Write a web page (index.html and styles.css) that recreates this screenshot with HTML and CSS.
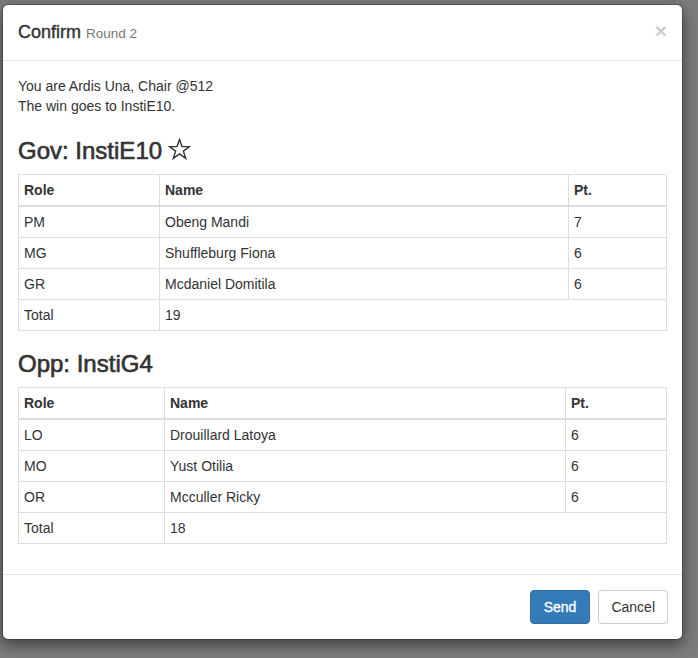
FILE: index.html
```html
<!DOCTYPE html>
<html>
<head>
<meta charset="utf-8">
<link rel="stylesheet" href="styles.css">
</head>
<body>
<div class="modal">
  <div class="modal-header">
    <h4 class="modal-title">Confirm <small>Round 2</small></h4>
    <span class="close">×</span>
  </div>
  <div class="modal-body">
    <div class="intro">You are Ardis Una, Chair @512<br>The win goes to InstiE10.</div>
    <h3 class="team-title first">Gov: InstiE10 <svg class="star" width="23" height="22" viewBox="0 0 23 22"><path d="M11.5 1.5 L14 8.6 L21.5 8.6 L15.4 13.1 L17.7 20.4 L11.5 15.9 L5.3 20.4 L7.6 13.1 L1.5 8.6 L9 8.6 Z" fill="none" stroke="#333" stroke-width="1.4" stroke-linejoin="miter"/></svg></h3>
    <table class="tbl">
      <colgroup><col class="c-role1"><col class="c-name1"><col></colgroup>
      <thead><tr><th>Role</th><th>Name</th><th>Pt.</th></tr></thead>
      <tbody>
        <tr><td>PM</td><td>Obeng Mandi</td><td>7</td></tr>
        <tr><td>MG</td><td>Shuffleburg Fiona</td><td>6</td></tr>
        <tr><td>GR</td><td>Mcdaniel Domitila</td><td>6</td></tr>
        <tr><td>Total</td><td colspan="2">19</td></tr>
      </tbody>
    </table>
    <h3 class="team-title">Opp: InstiG4</h3>
    <table class="tbl last">
      <colgroup><col class="c-role2"><col class="c-name2"><col></colgroup>
      <thead><tr><th>Role</th><th>Name</th><th>Pt.</th></tr></thead>
      <tbody>
        <tr><td>LO</td><td>Drouillard Latoya</td><td>6</td></tr>
        <tr><td>MO</td><td>Yust Otilia</td><td>6</td></tr>
        <tr><td>OR</td><td>Mcculler Ricky</td><td>6</td></tr>
        <tr><td>Total</td><td colspan="2">18</td></tr>
      </tbody>
    </table>
  </div>
  <div class="modal-footer">
    <button class="btn btn-primary">Send</button>
    <button class="btn btn-default">Cancel</button>
  </div>
</div>
</body>
</html>
```
FILE: styles.css
```css
html, body {
  margin: 0;
  padding: 0;
}
body {
  background: #7d7d7d;
  font-family: "Liberation Sans", Arial, sans-serif;
  font-size: 14px;
  line-height: 20px;
  color: #333;
  padding: 4px 0 0 2px;
  height: 658px;
  box-sizing: border-box;
  overflow: hidden;
}
.modal {
  width: 681px;
  box-sizing: border-box;
  background: #fff;
  border: 1px solid rgba(0,0,0,.2);
  border-radius: 6px;
  box-shadow: 0 5px 15px rgba(0,0,0,.5);
  background-clip: padding-box;
}
.modal-header {
  position: relative;
  padding: 14px 15px 13px;
  border-bottom: 1px solid #e5e5e5;
}
.modal-title {
  margin: 0;
  font-size: 18px;
  font-weight: normal;
  -webkit-text-stroke: 0.4px #333;
  line-height: 26px;
  color: #333;
}
.modal-title small {
  font-size: 13.5px;
  color: #777;
  font-weight: normal;
  -webkit-text-stroke: 0;
}
.close {
  position: absolute;
  right: 15px;
  top: 15px;
  font-size: 21px;
  font-weight: bold;
  line-height: 1;
  color: #000;
  opacity: .2;
}
.modal-body {
  padding: 15px 15px 30px;
}
.intro {
  margin: 0;
}
.team-title {
  font-size: 24px;
  font-weight: normal;
  -webkit-text-stroke: 0.65px #333;
  line-height: 26px;
  margin: 20px 0 10px;
  color: #333;
  display: flex;
  align-items: center;
  gap: 6px;
}
.team-title.first {
  margin-top: 22px;
}
.star {
  display: block;
  margin-top: -4px;
  -webkit-text-stroke: 0;
}
.tbl {
  width: 100%;
  border-collapse: collapse;
  border-spacing: 0;
  border: 1px solid #ddd;
  margin-bottom: 18px;
}
.tbl.last {
  margin-bottom: 0;
}
.tbl th, .tbl td {
  border: 1px solid #ddd;
  padding: 5px;
  text-align: left;
  line-height: 20px;
  vertical-align: top;
}
.tbl th {
  font-weight: bold;
  border-bottom-width: 2px;
}
.c-role1 { width: 141px; }
.c-name1 { width: 409px; }
.c-role2 { width: 146px; }
.c-name2 { width: 401px; }
.modal-footer {
  border-top: 1px solid #e5e5e5;
  padding: 15px 14px 15px;
  display: flex;
  justify-content: flex-end;
  gap: 8px;
}
.btn {
  font-family: "Liberation Sans", Arial, sans-serif;
  font-size: 14px;
  line-height: 20px;
  padding: 6px 12px;
  border-radius: 4px;
  border: 1px solid transparent;
  margin: 0;
}
.btn-primary {
  background: #337ab7;
  border-color: #2e6da4;
  color: #fff;
  padding: 6px 13px;
  -webkit-text-stroke: 0.3px #fff;
}
.btn-default {
  background: #fff;
  border-color: #ccc;
  color: #333;
}
```
